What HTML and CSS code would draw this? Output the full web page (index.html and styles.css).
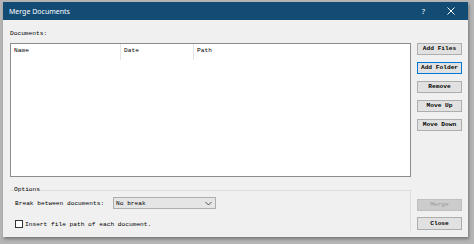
FILE: index.html
```html
<!DOCTYPE html>
<html>
<head>
<meta charset="utf-8">
<link rel="stylesheet" href="styles.css">
</head>
<body>
<div class="window">
  <div class="titlebar">
    <span class="title">Merge Documents</span>
    <span class="help">?</span>
    <svg class="close-x" width="8" height="8" viewBox="0 0 8 8"><path d="M0.5 0.5 L7.5 7.5 M7.5 0.5 L0.5 7.5" stroke="#ffffff" stroke-width="1"/></svg>
  </div>
  <div class="content">
    <div class="left">
      <div class="label">Documents:</div>
      <div class="list">
        <div class="list-head">
          <div class="col c-name">Name</div>
          <div class="col c-date">Date</div>
          <div class="col c-path">Path</div>
        </div>
      </div>
      <fieldset class="options">
        <legend>Options</legend>
        <div class="row">
          <span class="row-label">Break between documents:</span>
          <div class="select"><span>No break</span>
            <svg width="7" height="5" viewBox="0 0 7 5"><path d="M0.5 1 L3.5 4 L6.5 1" fill="none" stroke="#555" stroke-width="1"/></svg>
          </div>
        </div>
        <div class="check-row">
          <span class="checkbox"></span>
          <span>Insert file path of each document.</span>
        </div>
      </fieldset>
    </div>
    <div class="right">
      <button class="btn">Add Files</button>
      <button class="btn focused">Add Folder</button>
      <button class="btn">Remove</button>
      <button class="btn">Move Up</button>
      <button class="btn">Move Down</button>
      <button class="btn disabled merge">Merge</button>
      <button class="btn close">Close</button>
    </div>
  </div>
</div>
</body>
</html>
```
FILE: styles.css
```css
html, body {
  margin: 0;
  padding: 0;
}
body {
  width: 474px;
  height: 244px;
  background: #b5b5b5;
  padding: 2px 0 0 3px;
  box-sizing: border-box;
  overflow: hidden;
  font-family: "Liberation Mono", monospace;
  font-size: 6.2px;
  color: #000;
}
.window {
  width: 465px;
  height: 235px;
  background: #f0f0f0;
  display: flex;
  flex-direction: column;
  box-shadow: 1px 2px 3px rgba(0,0,0,0.35);
}
.titlebar {
  height: 18px;
  background: #124b74;
  display: flex;
  align-items: center;
  color: #ffffff;
  font-family: "Noto Sans", sans-serif;
  font-size: 7px;
  padding-left: 6px;
}
.title {
  flex: 1;
}
.help {
  font-size: 7.5px;
  margin-right: 22px;
}
.close-x {
  margin-right: 13px;
}
.content {
  flex: 1;
  display: grid;
  grid-template-columns: 401px 45px;
  column-gap: 6px;
  padding: 0 6px 0 7px;
}
.left {
  display: flex;
  flex-direction: column;
  padding-top: 9px;
}
.label {
  height: 10px;
  line-height: 10px;
  margin-bottom: 4px;
}
.list {
  height: 134px;
  box-sizing: border-box;
  border: 1px solid #8c8c8c;
  background: #ffffff;
}
.list-head {
  display: flex;
  height: 16px;
}
.col {
  padding: 3px 0 0 3px;
  box-sizing: border-box;
  border-right: 1px solid #e5e5e5;
}
.c-name { width: 110px; }
.c-date { width: 73px; }
.c-path { flex: 1; border-right: none; }
.options {
  margin: 9px 0 0 0;
  padding: 3px 0 0 5px;
  height: 45px;
  box-sizing: border-box;
  border: 1px solid #dcdcdc;
  border-left: none;
  border-bottom: none;
  min-width: 0;
}
.options legend {
  padding: 0;
  margin-left: -1px;
  line-height: 8px;
}
.row {
  display: flex;
  align-items: center;
  height: 12px;
}
.row-label {
  width: 98px;
}
.select {
  width: 103px;
  height: 12px;
  box-sizing: border-box;
  border: 1px solid #adadad;
  background: #e5e5e5;
  display: flex;
  align-items: center;
  justify-content: space-between;
  padding: 0 3px 0 2px;
}
.check-row {
  display: flex;
  align-items: center;
  margin-top: 11px;
  height: 8px;
}
.checkbox {
  width: 8px;
  height: 8px;
  box-sizing: border-box;
  border: 1px solid #333333;
  background: #ffffff;
  margin-right: 2px;
}
.right {
  display: flex;
  flex-direction: column;
  padding-top: 23px;
  padding-bottom: 7px;
  gap: 7px;
}
.btn {
  width: 45px;
  height: 12px;
  box-sizing: border-box;
  margin: 0;
  padding: 0;
  border: 1px solid #adadad;
  background: #e1e1e1;
  font-family: "Liberation Mono", monospace;
  font-size: 6.2px;
  font-weight: bold;
  color: #000;
  line-height: 10px;
}
.btn.focused {
  border-color: #0078d7;
}
.btn.disabled {
  background: #cccccc;
  border-color: #bfbfbf;
  color: #9a9a9a;
  font-weight: normal;
}
.merge {
  margin-top: auto;
}
.close {
  height: 13px;
  margin-top: -1px;
}
```
